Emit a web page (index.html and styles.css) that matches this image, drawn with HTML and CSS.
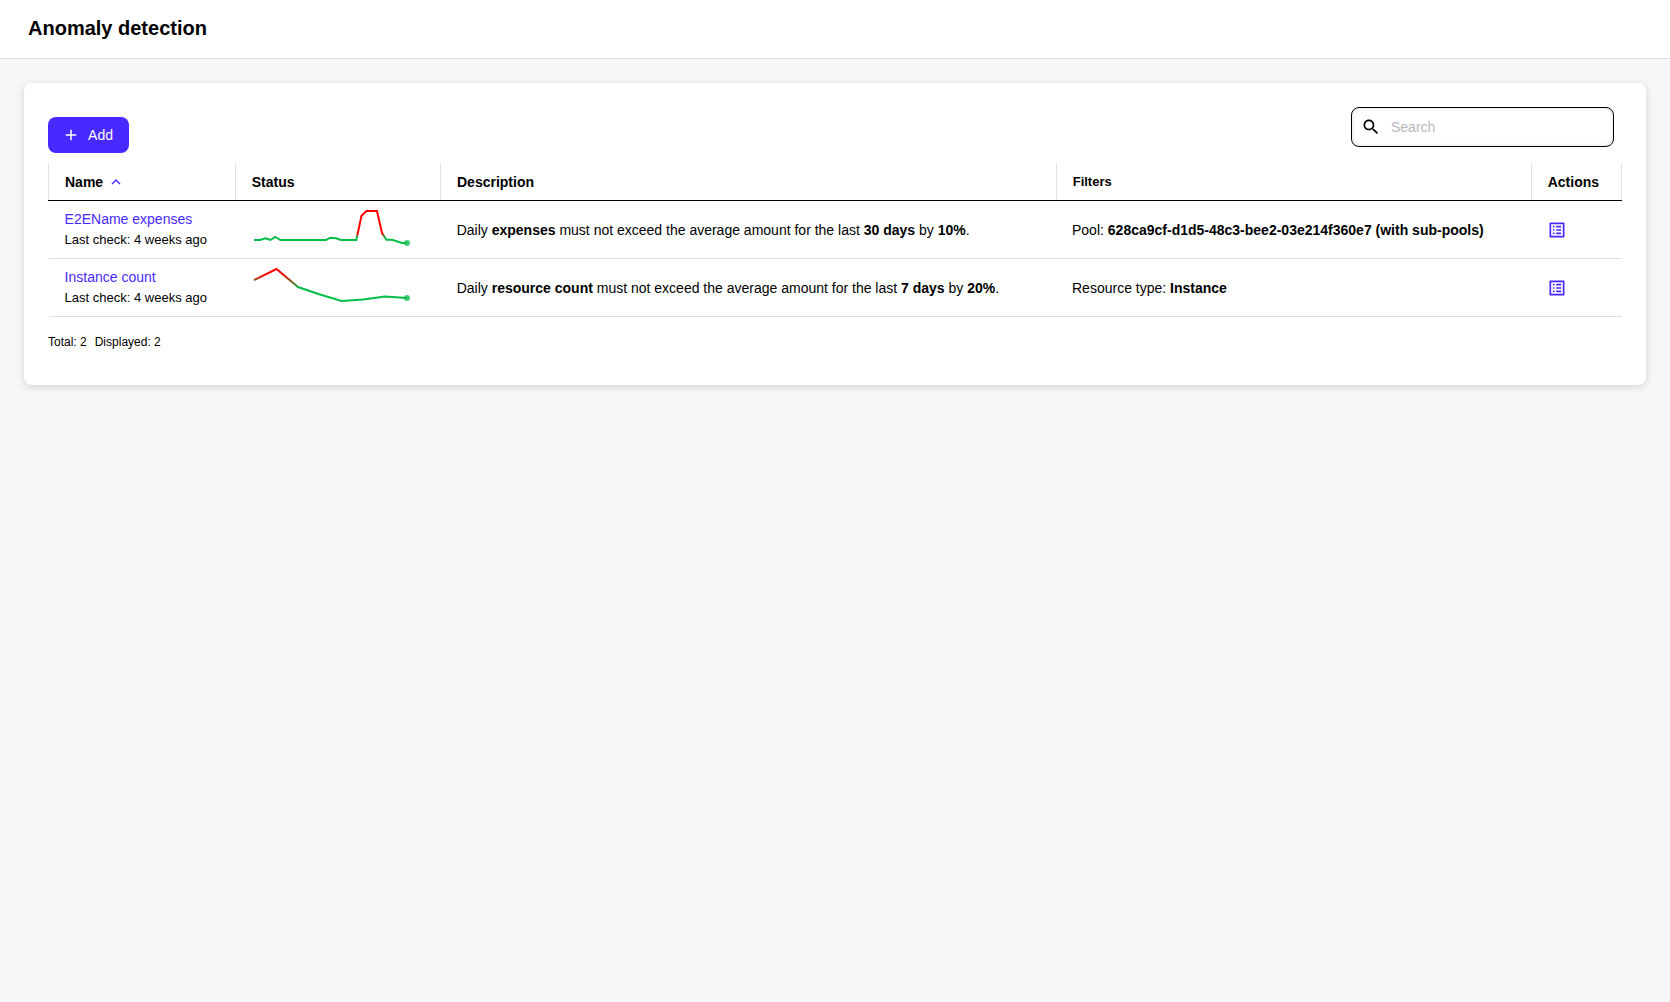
FILE: index.html
```html
<!DOCTYPE html>
<html lang="en">
<head>
<meta charset="utf-8">
<title>Anomaly detection</title>
<link rel="stylesheet" href="styles.css">
</head>
<body>
<header class="topbar"><h1 class="title">Anomaly detection</h1></header>
<main class="content">
  <section class="card">
    <div class="toolbar">
      <button class="add" type="button">
        <svg class="add-icon" viewBox="0 0 24 24"><path d="M19 13h-6v6h-2v-6H5v-2h6V5h2v6h6v2z"/></svg>
        <span>Add</span>
      </button>
      <label class="search">
        <svg class="search-icon" viewBox="0 0 24 24"><path d="M15.5 14h-.79l-.28-.27C15.41 12.59 16 11.11 16 9.5 16 5.91 13.09 3 9.5 3S3 5.91 3 9.5 5.91 16 9.5 16c1.61 0 3.09-.59 4.23-1.57l.27.28v.79l5 4.99L20.49 19l-4.99-5zm-6 0C7.01 14 5 11.99 5 9.5S7.01 5 9.5 5 14 7.01 14 9.5 11.99 14 9.5 14z"/></svg>
        <input class="search-input" type="text" placeholder="Search">
      </label>
    </div>
    <div class="table" role="table">
      <div class="row head" role="row">
        <div class="th" role="columnheader">Name
          <svg class="sort" viewBox="0 0 24 24"><path d="M12 8l-6 6 1.41 1.41L12 10.83l4.59 4.58L18 14z"/></svg>
        </div>
        <div class="th" role="columnheader">Status</div>
        <div class="th" role="columnheader">Description</div>
        <div class="th th-small" role="columnheader">Filters</div>
        <div class="th" role="columnheader">Actions</div>
      </div>
      <div class="row" role="row">
        <div class="td name" role="cell"><a class="link">E2EName expenses</a><span class="check">Last check: 4 weeks ago</span></div>
        <div class="td" role="cell">
          <svg class="spark" viewBox="252 209 160 40">
            <defs><linearGradient id="expenses" gradientUnits="userSpaceOnUse" x1="0" y1="234" x2="0" y2="237"><stop offset="0" stop-color="#f00"/><stop offset="1" stop-color="#00be46"/></linearGradient></defs>
            <path class="line" stroke="url(#expenses)" d="M254 240h6l5.5-1.700 5 1.700 4.700-3 5.300 3H326l4.500-2.300 5.500.5 5 1.700H356.300L357.500 234.500 361.500 215.700 366.500 211H377L382 233 386.500 239.800H392L402 243H407"/>
            <circle class="dot" cx="407" cy="243" r="3"/>
          </svg>
        </div>
        <div class="td" role="cell"><p class="text">Daily <b>expenses</b> must not exceed the average amount for the last <b>30 days</b> by <b>10%</b>.</p></div>
        <div class="td filters" role="cell"><p class="text">Pool: <b>628ca9cf-d1d5-48c3-bee2-03e214f360e7 (with sub-pools)</b></p></div>
        <div class="td" role="cell">
          <svg class="action" viewBox="0 0 24 24"><path d="M19 5v14H5V5h14m1.100-2H3.900c-.5 0-.9.4-.9.900v16.200c0 .4.400.900.900.900h16.200c.4 0 .900-.5.900-.900V3.900c0-.5-.5-.9-.9-.9zM11 7h6v2h-6V7zm0 4h6v2h-6v-2zm0 4h6v2h-6zM7 7h2v2H7zm0 4h2v2H7zm0 4h2v2H7z"/></svg>
        </div>
      </div>
      <div class="row" role="row">
        <div class="td name" role="cell"><a class="link">Instance count</a><span class="check">Last check: 4 weeks ago</span></div>
        <div class="td" role="cell">
          <svg class="spark" viewBox="252 267 160 40">
            <defs><linearGradient id="count" gradientUnits="userSpaceOnUse" x1="0" y1="271" x2="0" y2="288"><stop offset="0" stop-color="#f00"/><stop offset=".2" stop-color="#f00"/><stop offset="1" stop-color="#00be46"/></linearGradient></defs>
            <path class="line" stroke="url(#count)" d="M254 280L276.500 269 298 287 320 294.500 341.500 301 363 299.500 385 296.500 407 298"/>
            <circle class="dot" cx="407" cy="298" r="3"/>
          </svg>
        </div>
        <div class="td" role="cell"><p class="text">Daily <b>resource count</b> must not exceed the average amount for the last <b>7 days</b> by <b>20%</b>.</p></div>
        <div class="td filters" role="cell"><p class="text">Resource type: <b>Instance</b></p></div>
        <div class="td" role="cell">
          <svg class="action" viewBox="0 0 24 24"><path d="M19 5v14H5V5h14m1.100-2H3.900c-.5 0-.9.4-.9.900v16.200c0 .4.400.900.900.900h16.200c.4 0 .900-.5.900-.900V3.900c0-.5-.5-.9-.9-.9zM11 7h6v2h-6V7zm0 4h6v2h-6v-2zm0 4h6v2h-6zM7 7h2v2H7zm0 4h2v2H7zm0 4h2v2H7z"/></svg>
        </div>
      </div>
    </div>
    <div class="totals"><span>Total: 2</span><span>Displayed: 2</span></div>
  </section>
</main>
</body>
</html>
```
FILE: styles.css
```css
* { box-sizing: border-box; }
body {
  margin: 0;
  min-height: 100vh;
  background: #f5f7f9;
  color: #000;
  font: 14px/20px "Liberation Sans", Arial, sans-serif;
}
.topbar {
  height: 59px;
  padding: 0 28px;
  display: flex;
  align-items: center;
  background: #fff;
  border-bottom: 1px solid #dee1e4;
}
.title { margin: 0 0 2px; font-size: 20px; line-height: 28px; }
.content { padding: 24px; }
.card {
  height: 302px;
  padding: 24px;
  background: #fff;
  border-radius: 8px;
  box-shadow: 0 2px 8px rgba(0, 0, 0, .14);
}
.toolbar {
  height: 56px;
  display: flex;
  justify-content: space-between;
  padding-right: 8px;
}
.add {
  width: 81px;
  height: 36px;
  margin: 10px 0 0;
  padding: 0 16px 0 14px;
  display: flex;
  align-items: center;
  justify-content: space-between;
  border: 0;
  border-radius: 8px;
  background: #472aff;
  color: #fff;
  font: inherit;
}
.add-icon { width: 18px; height: 18px; fill: #fff; }
.search {
  width: 263px;
  height: 40px;
  display: flex;
  align-items: center;
  gap: 10px;
  padding: 0 9px;
  border: 1px solid #000;
  border-radius: 8px;
  box-shadow: inset 0 0 4px rgba(0, 0, 0, .14);
}
.search-icon { width: 20px; height: 20px; flex: none; }
.search-input {
  min-width: 0;
  flex: 1;
  padding: 0;
  border: 0;
  outline: 0;
  background: none;
  font: inherit;
}
.search-input::placeholder { color: #b5b8be; }
.row {
  height: 58px;
  margin-left: 1px;
  display: grid;
  grid-template-columns: 186px 205px 616px 475px 91px;
  border-bottom: 1px solid #dedede;
}
.head {
  height: 38px;
  margin-left: 0;
  grid-template-columns: 187px 205px 616px 475px 91px;
  border-bottom-color: #000;
}
.th {
  display: flex;
  align-items: center;
  gap: 4px;
  padding-left: 15.7px;
  border-left: 1px solid #dfe2e5;
  font-weight: 700;
}
.th:first-child, .th:nth-child(3) { padding-left: 16px; }
.th:last-child { border-right: 1px solid #dfe2e5; }
.th-small { font-size: 13px; }
.sort { width: 18px; height: 18px; fill: #472aff; }
.td { display: flex; align-items: center; padding-left: 16.7px; }
.filters, .td:last-child { padding-left: 16px; }
.name {
  flex-direction: column;
  align-items: flex-start;
  justify-content: center;
  padding: 0 0 2px 15.6px;
}
.link { color: #472aff; line-height: 22px; margin-top: -1px; }
.check { font-size: 13px; line-height: 19px; }
.text { margin: 0; white-space: nowrap; }
.spark { width: 160px; height: 40px; margin-bottom: 1px; }
.line { fill: none; stroke-width: 2; }
.dot { fill: #00be46; fill-opacity: .75; }
.action { width: 20px; height: 20px; fill: #472aff; }
.totals {
  display: flex;
  gap: 8px;
  margin-top: 15px;
  font-size: 12px;
}
```
